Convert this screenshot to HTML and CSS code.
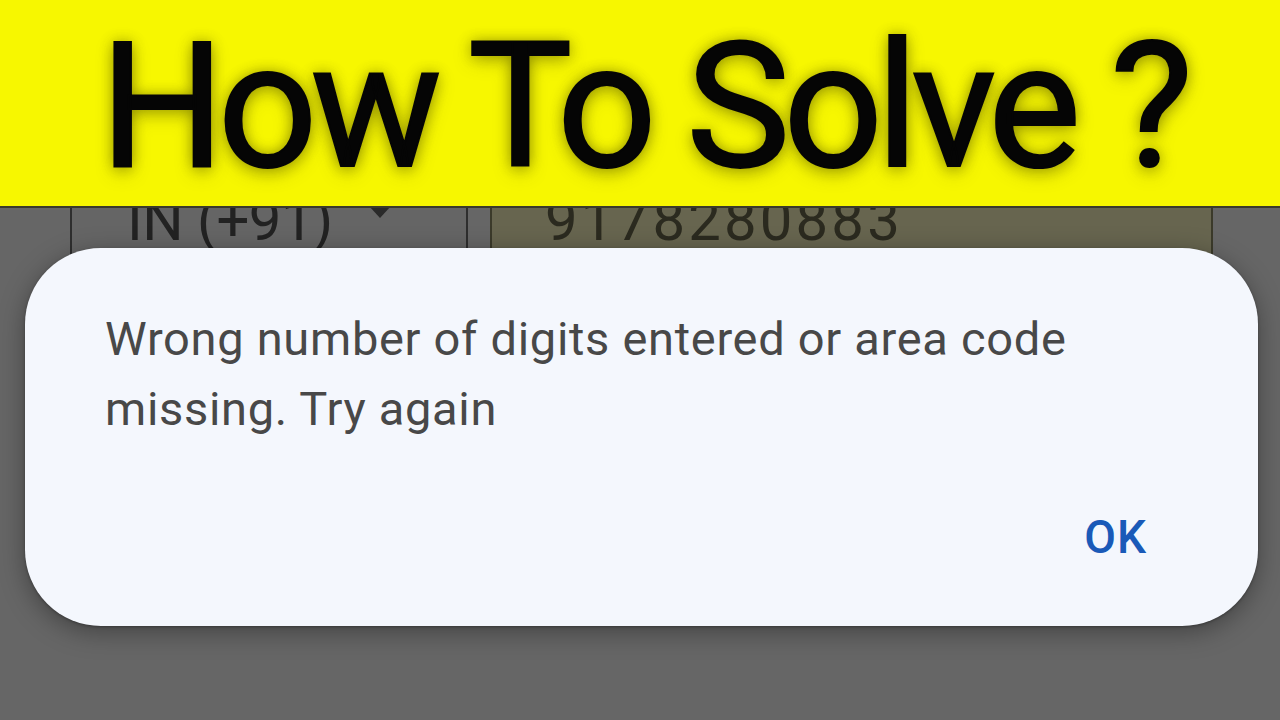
FILE: index.html
```html
<!DOCTYPE html>
<html>
<head>
<meta charset="utf-8">
<link rel="stylesheet" href="styles.css">
</head>
<body>
<div class="page">
  <header class="banner">
    <h1 class="title">How To Solve ?</h1>
  </header>
  <div class="form">
    <div class="field country">
      <span class="field-text">IN (+91)</span>
      <span class="caret"></span>
    </div>
    <div class="field phone">
      <span class="field-text digits">9178280883</span>
    </div>
  </div>
  <div class="dialog">
    <p class="message">Wrong number of digits entered or area code missing. Try again</p>
    <div class="actions">
      <span class="ok">OK</span>
    </div>
  </div>
</div>
</body>
</html>
```
FILE: styles.css
```css
* { box-sizing: border-box; }
html, body { margin: 0; padding: 0; }
body {
  width: 1280px;
  height: 720px;
  overflow: hidden;
  background: #666666;
  font-family: Roboto, "Noto Sans", "Liberation Sans", sans-serif;
}
.page {
  position: relative;
  width: 1280px;
  height: 720px;
  overflow: hidden;
  background: #666666;
}
.banner {
  position: relative;
  z-index: 2;
  height: 208px;
  background: #f7f700;
  border-bottom: 2px solid #3a3a2a;
  display: flex;
  align-items: center;
  justify-content: center;
  overflow: hidden;
}
.title {
  margin: 0;
  padding-left: 6px;
  margin-top: 6px;
  font-family: Roboto, "Liberation Sans", sans-serif;
  font-weight: 400;
  font-size: 175px;
  line-height: 1;
  color: #050505;
  letter-spacing: -7px;
  -webkit-text-stroke: 2px #050505;
  text-shadow: 0 0 14px rgba(60, 60, 0, 0.45), 0 6px 18px rgba(80, 80, 0, 0.35);
  white-space: nowrap;
}
.form {
  position: relative;
  z-index: 1;
  margin-top: -60px;
  display: flex;
  gap: 22px;
  padding-left: 70px;
}
.field {
  height: 140px;
  border: 2px solid #2e2e2e;
  border-radius: 8px;
  display: flex;
  align-items: flex-end;
  padding-bottom: 37px;
  font-size: 58px;
  font-family: Roboto, "Liberation Sans", sans-serif;
  line-height: 1;
}
.country {
  width: 398px;
  padding-left: 55px;
  gap: 36px;
  color: #222222;
  background: #656565;
}
.caret {
  width: 0;
  height: 0;
  border-left: 11px solid transparent;
  border-right: 11px solid transparent;
  border-top: 12px solid #2a2a2a;
  margin-bottom: 31px;
}
.phone {
  width: 723px;
  padding-left: 53px;
  background: #67654f;
  color: #2b2a1f;
  border-color: #3b3a2a;
}
.field-text { letter-spacing: -0.5px; }
.digits { letter-spacing: 3.2px; }
.dialog {
  position: absolute;
  z-index: 3;
  left: 25px;
  top: 248px;
  width: 1233px;
  height: 378px;
  border-radius: 76px;
  background: #f4f7fd;
  box-shadow: 0 6px 26px rgba(0, 0, 0, 0.35), 0 1px 3px rgba(0, 0, 0, 0.3);
  padding: 56px 100px 0 80px;
}
.message {
  margin: 0;
  font-family: Roboto, "Noto Sans", sans-serif;
  font-size: 47px;
  line-height: 70px;
  color: #484848;
  letter-spacing: 0.7px;
}
.actions {
  display: flex;
  justify-content: flex-end;
  margin-top: 70px;
  padding-right: 11px;
}
.ok {
  font-family: Roboto, "Noto Sans", sans-serif;
  font-size: 46px;
  line-height: 46px;
  font-weight: 500;
  color: #1a5ab8;
  letter-spacing: 1px;
}
```
